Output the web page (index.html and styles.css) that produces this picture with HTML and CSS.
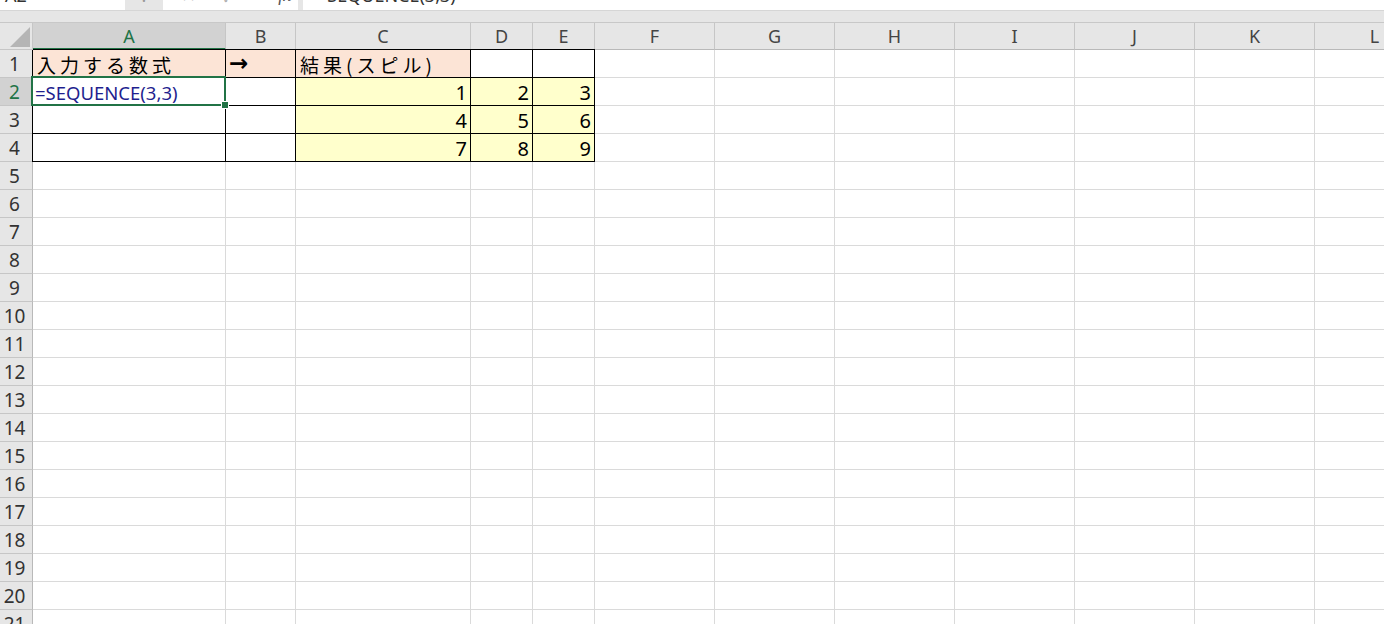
FILE: index.html
```html
<!DOCTYPE html>
<html lang="ja">
<head>
  <meta charset="UTF-8" />
  <title>SEQUENCE</title>
  <meta name="viewport" content="width=device-width, initial-scale=1" />
  <link rel="stylesheet" href="styles.css">
</head>
<body>

<div class="formula-bar">
  <div class="fb-inner">
    <div class="name-box">A2</div>
    <div class="fb-dots">⁝</div>
    <div class="fb-buttons"><span>✕</span><span>✓</span><span class="fx">fx</span></div>
    <div class="fb-input">=SEQUENCE(3,3)</div>
  </div>
</div>
<div class="fb-gap"></div>

<div class="sheet" id="sheet"></div>

<script>
  const cols = ['A','B','C','D','E','F','G','H','I','J','K','L','M'];
  const sheet = document.getElementById("sheet");

  // cell contents and formats for the used range A1:E4
  const cells = {
    A1: {text: '入力する数式', cls: 'pink jp'},
    B1: {text: '→', cls: 'pink arrow'},
    C1: {text: '結果(スピル)', cls: 'pink jp'},
    A2: {text: '=SEQUENCE(3,3)', cls: 'formula active'},
    C2: {text: '1', cls: 'yellow num'}, D2: {text: '2', cls: 'yellow num'}, E2: {text: '3', cls: 'yellow num'},
    C3: {text: '4', cls: 'yellow num'}, D3: {text: '5', cls: 'yellow num'}, E3: {text: '6', cls: 'yellow num'},
    C4: {text: '7', cls: 'yellow num'}, D4: {text: '8', cls: 'yellow num'}, E4: {text: '9', cls: 'yellow num'}
  };

  let html = '<div class="corner"><svg width="20" height="20" viewBox="0 0 20 20"><polygon points="20,0 20,20 0,20" fill="#b5b5b5"/></svg></div>';
  cols.forEach(c => {
    html += `<div class="col-head${c === 'A' ? ' sel' : ''}">${c}</div>`;
  });

  for (let r = 1; r <= 21; r++) {
    html += `<div class="row-head${r === 2 ? ' sel' : ''}">${r}</div>`;
    cols.forEach((c, i) => {
      const key = c + r;
      const cell = cells[key] || {text: '', cls: ''};
      let cls = 'cell ' + cell.cls;
      if (r <= 4 && i <= 4) cls += ' boxed';
      if (r === 1 && i <= 4) cls += ' top';
      if (i === 0 && r <= 4) cls += ' left';
      html += `<div class="${cls}">${cell.text}</div>`;
    });
  }
  sheet.innerHTML = html;
</script>

</body>
</html>
```

FILE: styles.css
```css
html, body {
  margin: 0;
  padding: 0;
  overflow: hidden;
  background: #e6e6e6;
  font-family: "Noto Sans", "Noto Sans CJK JP", sans-serif;
}

.formula-bar {
  height: 10px;
  overflow: hidden;
  border-bottom: 1px solid #d6d6d6;
}
.fb-inner {
  display: flex;
  height: 30px;
  margin-top: -20px;
  font-size: 18px;
  line-height: 30px;
  color: #333;
}
.name-box {
  width: 120px;
  padding-left: 5px;
  background: #fff;
}
.fb-dots {
  width: 38px;
  text-align: center;
  color: #999;
}
.fb-buttons {
  width: 135px;
  background: #fff;
  display: flex;
  gap: 26px;
  padding-left: 18px;
  box-sizing: border-box;
  color: #b0b0b0;
}
.fb-buttons .fx {
  font-style: italic;
  color: #555;
  margin-left: 18px;
  font-family: "Liberation Serif", serif;
}
.fb-input {
  flex: 1;
  margin-left: 5px;
  padding-left: 14px;
  background: #fff;
}
.fb-gap {
  height: 11px;
  border-bottom: 1px solid #c8c8c8;
}

/* worksheet grid */
.sheet {
  display: grid;
  grid-template-columns: 33px 193px 70px 175px 62px 62px repeat(8, 120px);
  grid-template-rows: 27px;
  grid-auto-rows: 28px;
  width: max-content;
  background: #fff;
}
.sheet > div {
  box-sizing: border-box;
  border-right: 1px solid #dadada;
  border-bottom: 1px solid #dadada;
}
.corner {
  background: #e6e6e6;
  display: flex;
  align-items: flex-end;
  justify-content: flex-end;
  padding: 0 2px 2px 0;
  border-color: #c6c6c6 !important;
}
.col-head {
  background: #e6e6e6;
  color: #444;
  font-size: 18px;
  text-align: center;
  line-height: 27px;
  border-right-color: #c6c6c6 !important;
  border-bottom-color: #b9b9b9 !important;
}
.col-head.sel {
  background: #d2d2d2;
  color: #217346;
  border-bottom: 2px solid #217346 !important;
}
.row-head {
  background: #e6e6e6;
  color: #333;
  font-size: 19px;
  line-height: 28px;
  text-align: center;
  padding-right: 3px;
  border-right-color: #b9b9b9 !important;
  border-bottom-color: #c6c6c6 !important;
}
.row-head.sel {
  background: #d2d2d2;
  color: #217346;
}

.cell {
  font-size: 20px;
  line-height: 29px;
  padding: 0 3px;
  white-space: nowrap;
  color: #000;
}
.cell.boxed {
  border-right-color: #000 !important;
  border-bottom-color: #000 !important;
}
.cell.top {
  box-shadow: 0 -1px 0 #000;
}
.cell.left {
  box-shadow: -1px 0 0 #000;
}
.cell.top.left {
  box-shadow: -1px 0 0 #000, 0 -1px 0 #000;
}
.pink {
  background: #fce4d6;
}
.yellow {
  background: #ffffcc;
}
.jp {
  font-family: "Noto Sans CJK JP", sans-serif;
  font-size: 19px;
  letter-spacing: 4px;
  padding-left: 4px;
}
.arrow {
  font-family: "DejaVu Sans", sans-serif;
  font-weight: bold;
  font-size: 23px;
  line-height: 27px;
}
.num {
  text-align: right;
}
.formula {
  color: #1f1f8f;
  font-size: 18.5px;
  padding-left: 2px;
}

/* selected cell frame with fill handle */
.active {
  position: relative;
}
.active::before {
  content: "";
  position: absolute;
  left: -2px;
  top: -2px;
  right: -1px;
  bottom: -1px;
  border: 2px solid #217346;
}
.active::after {
  content: "";
  position: absolute;
  right: -4px;
  bottom: -4px;
  width: 6px;
  height: 6px;
  background: #217346;
  border: 1px solid #fff;
}
```
